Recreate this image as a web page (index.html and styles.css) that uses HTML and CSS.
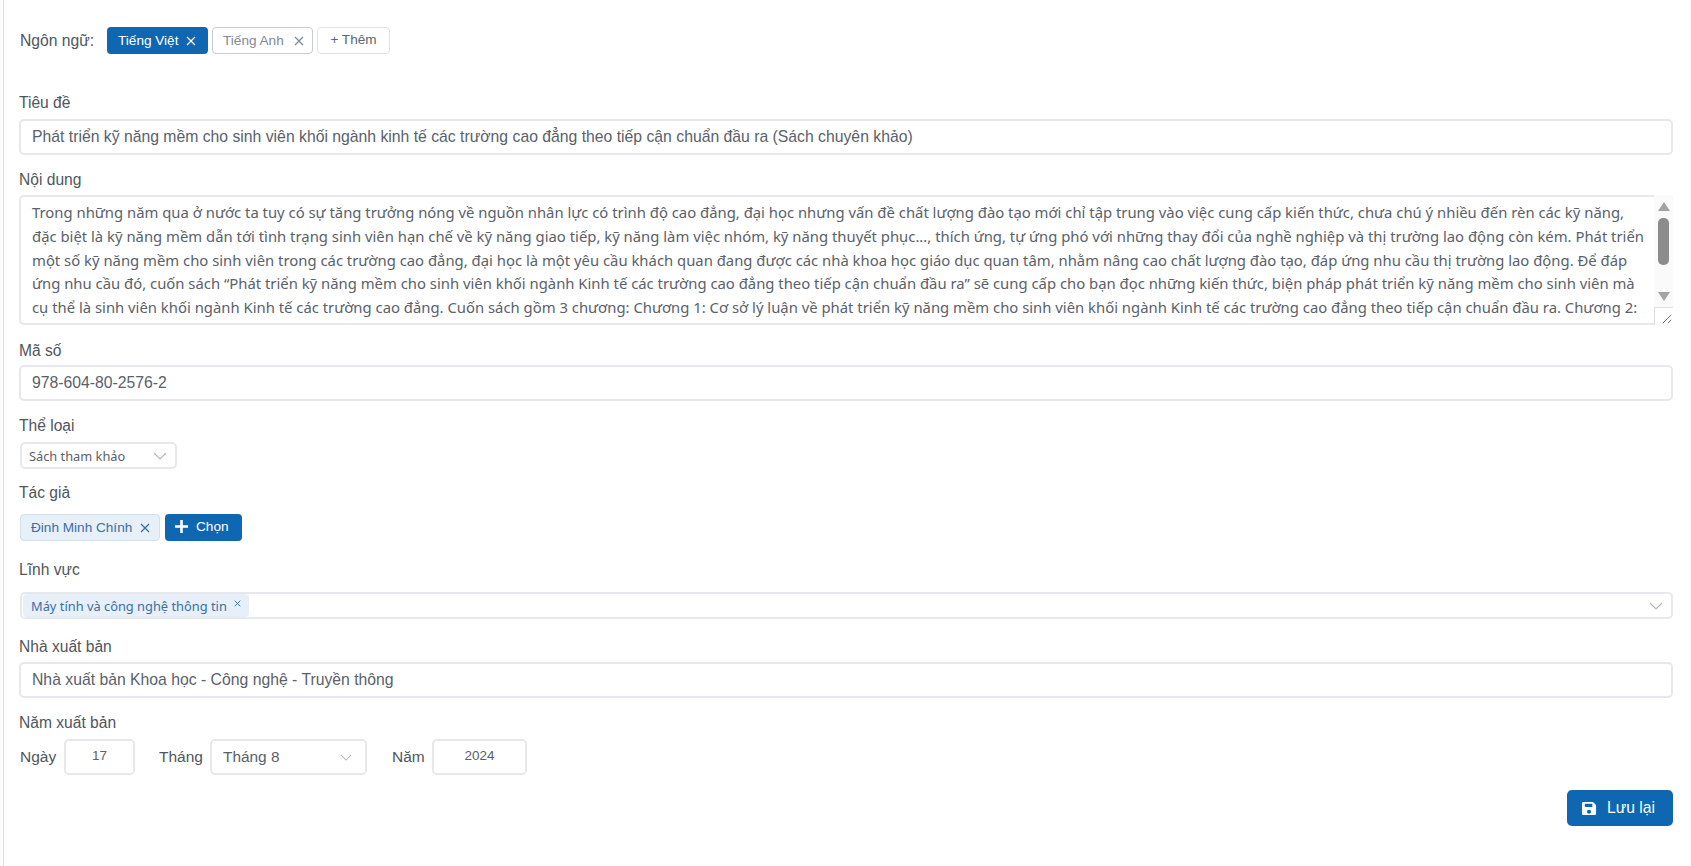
FILE: index.html
```html
<!DOCTYPE html>
<html lang="vi">

<head>
    <meta charset="UTF-8">
    <meta name="viewport" content="width=device-width, initial-scale=1.0">
    <title>Sửa sách</title>
    <link rel="stylesheet" href="styles.css">
</head>

<body>
    <div class="page">
        <div class="lang-row">
            <span class="lang-label">Ngôn ngữ:</span>
            <span class="tag tag-active">Tiếng Việt
                <svg class="x-icon" viewBox="0 0 10 10"><path d="M1 1l8 8M9 1l-8 8" /></svg>
            </span>
            <span class="tag tag-outline">Tiếng Anh
                <svg class="x-icon" viewBox="0 0 10 10"><path d="M1 1l8 8M9 1l-8 8" /></svg>
            </span>
            <span class="tag tag-add">+ Thêm</span>
        </div>

        <div class="group group-title">
            <label class="field-label">Tiêu đề</label>
            <div class="input">Phát triển kỹ năng mềm cho sinh viên khối ngành kinh tế các trường cao đẳng theo tiếp cận chuẩn đầu ra (Sách chuyên khảo)</div>
        </div>

        <div class="group group-content">
            <label class="field-label">Nội dung</label>
            <div class="textarea">
                <div class="textarea-text">
                    <div>Trong những năm qua ở nước ta tuy có sự tăng trưởng nóng về nguồn nhân lực có trình độ cao đẳng, đại học nhưng vấn đề chất lượng đào tạo mới chỉ tập trung vào việc cung cấp kiến thức, chưa chú ý nhiều đến rèn các kỹ năng,</div>
                    <div>đặc biệt là kỹ năng mềm dẫn tới tình trạng sinh viên hạn chế về kỹ năng giao tiếp, kỹ năng làm việc nhóm, kỹ năng thuyết phục..., thích ứng, tự ứng phó với những thay đổi của nghề nghiệp và thị trường lao động còn kém. Phát triển</div>
                    <div>một số kỹ năng mềm cho sinh viên trong các trường cao đẳng, đại học là một yêu cầu khách quan đang được các nhà khoa học giáo dục quan tâm, nhằm nâng cao chất lượng đào tạo, đáp ứng nhu cầu thị trường lao động. Để đáp</div>
                    <div>ứng nhu cầu đó, cuốn sách “Phát triển kỹ năng mềm cho sinh viên khối ngành Kinh tế các trường cao đẳng theo tiếp cận chuẩn đầu ra” sẽ cung cấp cho bạn đọc những kiến thức, biện pháp phát triển kỹ năng mềm cho sinh viên mà</div>
                    <div>cụ thể là sinh viên khối ngành Kinh tế các trường cao đẳng. Cuốn sách gồm 3 chương: Chương 1: Cơ sở lý luận về phát triển kỹ năng mềm cho sinh viên khối ngành Kinh tế các trường cao đẳng theo tiếp cận chuẩn đầu ra. Chương 2:</div>
                    <div>Thực trạng phát triển kỹ năng mềm cho sinh viên khối ngành Kinh tế các trường cao đẳng theo tiếp cận chuẩn đầu ra. Chương 3: Biện pháp phát triển kỹ năng mềm</div>
                </div>
                <div class="scrollbar">
                    <div class="scroll-track">
                        <svg class="scroll-arrow" viewBox="0 0 12 9"><path d="M6 0l6 9H0z" /></svg>
                        <div class="scroll-thumb"></div>
                        <svg class="scroll-arrow" viewBox="0 0 12 9"><path d="M0 0h12L6 9z" /></svg>
                    </div>
                    <div class="resizer">
                        <svg viewBox="0 0 12 12"><path d="M1 11L11 1M7 11l4-4" /></svg>
                    </div>
                </div>
            </div>
        </div>

        <div class="group group-code">
            <label class="field-label">Mã số</label>
            <div class="input">978-604-80-2576-2</div>
        </div>

        <div class="group group-type">
            <label class="field-label">Thể loại</label>
            <div class="select select-type">Sách tham khảo
                <svg class="chevron" viewBox="0 0 14 8"><path d="M1 1l6 6 6-6" /></svg>
            </div>
        </div>

        <div class="group group-author">
            <label class="field-label">Tác giả</label>
            <div class="author-row">
                <span class="tag tag-light">Đinh Minh Chính
                    <svg class="x-icon" viewBox="0 0 10 10"><path d="M1 1l8 8M9 1l-8 8" /></svg>
                </span>
                <span class="tag tag-choose">
                    <svg class="plus-icon" viewBox="0 0 12 12"><path d="M6 0v12M0 6h12" /></svg>
                    Chọn
                </span>
            </div>
        </div>

        <div class="group group-field">
            <label class="field-label">Lĩnh vực</label>
            <div class="multi-select">
                <span class="chip">Máy tính và công nghệ thông tin
                    <svg class="chip-x" viewBox="0 0 10 10"><path d="M1 1l8 8M9 1l-8 8" /></svg>
                </span>
                <svg class="chevron" viewBox="0 0 14 8"><path d="M1 1l6 6 6-6" /></svg>
            </div>
        </div>

        <div class="group group-publisher">
            <label class="field-label">Nhà xuất bản</label>
            <div class="input">Nhà xuất bản Khoa học - Công nghệ - Truyền thông</div>
        </div>

        <div class="group group-year">
            <label class="field-label">Năm xuất bản</label>
            <div class="date-row">
                <span class="date-label date-day-label">Ngày</span>
                <div class="date-input date-day">17</div>
                <span class="date-label date-month-label">Tháng</span>
                <div class="select select-month">Tháng 8
                    <svg class="chevron" viewBox="0 0 14 8"><path d="M1 1l6 6 6-6" /></svg>
                </div>
                <span class="date-label date-year-label">Năm</span>
                <div class="date-input date-year">2024</div>
            </div>
        </div>

        <div class="actions">
            <button class="save-button">
                <svg class="save-icon" viewBox="0 0 16 16"><path fill-rule="evenodd" d="M1.5 1h10.2L15 4.3v9.2c0 .8-.7 1.5-1.5 1.5h-12C.7 15 0 14.300 0 13.500v-11C0 1.700.7 1 1.500 1zM3 3v3.500h8V3zm4.500 6.200a2.200 2.200 0 1 0 0 4.400 2.200 2.200 0 0 0 0-4.400z" /></svg>
                Lưu lại
            </button>
        </div>
    </div>
</body>
</html>
```

FILE: styles.css
```css
body {
    margin: 0;
    font-family: "Liberation Sans", Arial, sans-serif;
    background-color: #fcfcfd;
    color: #50565c;
}

.page {
    box-sizing: border-box;
    height: 866px;
    margin: 0 2px 0 3px;
    padding: 27px 16px 0 15px;
    background-color: #ffffff;
    border-left: 1px solid #dcdee3;
}

.lang-row {
    display: flex;
    align-items: center;
    height: 27px;
}

.lang-label {
    padding-left: 1px;
    width: 87px;
    font-size: 15.7px;
}

.tag {
    box-sizing: border-box;
    display: inline-flex;
    align-items: center;
    height: 27px;
    border-radius: 4px;
    font-size: 13.6px;
    white-space: nowrap;
}

.x-icon {
    width: 10px;
    height: 10px;
    margin-left: 8px;
    fill: none;
    stroke: currentColor;
    stroke-width: 1.3;
}

.tag-active {
    width: 101px;
    padding-left: 11px;
    background-color: #0f67b1;
    color: #ffffff;
}

.tag-outline {
    width: 101px;
    margin-left: 4px;
    padding-left: 10px;
    border: 1px solid #c6ccd6;
    color: #828a94;
}

.tag-outline .x-icon {
    margin-left: 10px;
}

.tag-add {
    width: 73px;
    margin-left: 4px;
    justify-content: center;
    padding-bottom: 2px;
    border: 1px solid #dfe2e8;
    color: #5c6570;
}

.group {
    margin-top: 12px;
}

.group-title {
    margin-top: 37px;
}

.group-content {
    margin-top: 13px;
}

.group-content .field-label {
    margin-bottom: 3px;
}

.group-code {
    margin-top: 14px;
}

.group-code .field-label {
    margin-bottom: 2px;
}

.group-type {
    margin-top: 13px;
}

.group-type .field-label {
    margin-bottom: 4px;
}

.group-author {
    margin-top: 12px;
}

.group-author .field-label {
    margin-bottom: 9px;
}

.group-field {
    margin-top: 17px;
}

.group-field .field-label {
    margin-bottom: 10px;
}

.group-publisher {
    margin-top: 16px;
}

.group-publisher .field-label {
    margin-bottom: 3px;
}

.group-year {
    margin-top: 13px;
}

.field-label {
    display: block;
    height: 24px;
    margin-bottom: 4px;
    line-height: 24px;
    font-size: 15.6px;
}

.input {
    box-sizing: border-box;
    height: 36px;
    line-height: 32px;
    padding: 0 11px;
    background-color: #ffffff;
    border: 2px solid #e6e8ee;
    border-radius: 5px;
    font-size: 15.75px;
    color: #5a6169;
}

.textarea {
    display: flex;
    height: 130px;
}

.textarea-text {
    flex: 1;
    min-width: 0;
    padding: 4px 0 0 11px;
    overflow: hidden;
    border-top: 2px solid #e6e8ee;
    border-left: 2px solid #e6e8ee;
    border-bottom: 2px solid #e6e8ee;
    border-radius: 5px 0 0 5px;
    font-family: "Noto Sans", sans-serif;
    font-size: 14.85px;
    line-height: 23.75px;
    color: #5a6169;
    white-space: nowrap;
}

.scrollbar {
    display: flex;
    flex-direction: column;
    flex: 0 0 19px;
    background-color: #ffffff;
}

.scroll-track {
    flex: 1;
    display: flex;
    flex-direction: column;
    align-items: center;
    padding-top: 7px;
    background-color: #fafafa;
}

.scroll-arrow {
    width: 12px;
    height: 9px;
    fill: #a3a3a3;
}

.scroll-thumb {
    width: 11px;
    height: 47px;
    margin: 7px 0 27px;
    border-radius: 5px;
    background-color: #8c8c8c;
}

.resizer {
    flex: 0 0 18px;
    box-sizing: border-box;
    padding: 6px 0 0 7px;
    border-top: 1px solid #dcdee3;
    border-left: 1px solid #dcdee3;
}

.resizer svg {
    display: block;
    width: 10px;
    height: 10px;
    fill: none;
    stroke: #555555;
    stroke-width: 1;
}

.select {
    box-sizing: border-box;
    display: flex;
    align-items: center;
    justify-content: space-between;
    background-color: #ffffff;
    border: 2px solid #e6e8ee;
    border-radius: 5px;
    color: #5a6169;
}

.chevron {
    width: 14px;
    height: 8px;
    fill: none;
    stroke: #b4b8be;
    stroke-width: 1.2;
}

.select-type {
    width: 157px;
    height: 27px;
    margin-left: 1px;
    padding: 0 8px 0 7px;
    font-family: "Noto Sans", sans-serif;
    font-size: 12.8px;
}

.author-row {
    display: flex;
    align-items: center;
    margin-left: 1px;
}

.tag-light {
    width: 140px;
    padding-left: 10px;
    background-color: #e7f0f8;
    border: 1px solid #cfe0ef;
    color: #3a6fa3;
}

.tag-choose {
    width: 77px;
    margin-left: 5px;
    padding: 0 0 2px 10px;
    background-color: #0f67b1;
    color: #ffffff;
}

.plus-icon {
    width: 13px;
    height: 13px;
    margin-right: 8px;
    fill: none;
    stroke: #ffffff;
    stroke-width: 2.4;
}

.multi-select {
    box-sizing: border-box;
    display: flex;
    align-items: center;
    justify-content: space-between;
    height: 27px;
    padding: 0 8px 0 1px;
    margin-left: 1px;
    border: 2px solid #e6e8ee;
    border-radius: 5px;
}

.chip {
    display: inline-flex;
    align-items: center;
    box-sizing: border-box;
    width: 226px;
    height: 23px;
    padding-left: 8px;
    background-color: #e7f0f8;
    border-radius: 4px;
    font-family: "Noto Sans", sans-serif;
    font-size: 12.85px;
    color: #3a6fa3;
    white-space: nowrap;
}

.chip-x {
    width: 7px;
    height: 7px;
    margin: -4px 0 0 7px;
    fill: none;
    stroke: #3a6fa3;
    stroke-width: 1.4;
}

.date-row {
    display: flex;
    align-items: center;
    height: 36px;
}

.date-label {
    padding-left: 1px;
    font-size: 15.5px;
}

.date-input {
    box-sizing: border-box;
    height: 36px;
    line-height: 30px;
    background-color: #ffffff;
    border: 2px solid #e6e8ee;
    border-radius: 5px;
    font-size: 13.5px;
    text-align: center;
    color: #5a6169;
}

.date-day-label {
    width: 44px;
}

.date-day {
    width: 71px;
}

.date-month-label {
    width: 51px;
    margin-left: 23px;
}

.select-month {
    width: 157px;
    height: 36px;
    padding: 0 13px 0 11px;
    font-size: 15.4px;
}

.select-month .chevron {
    width: 12px;
    height: 7px;
}

.date-year-label {
    width: 40px;
    margin-left: 24px;
}

.date-year {
    width: 95px;
}

.actions {
    display: flex;
    justify-content: flex-end;
    margin-top: 15px;
}

.save-button {
    display: flex;
    align-items: center;
    width: 106px;
    height: 36px;
    padding: 0 0 0 15px;
    background-color: #0f67b1;
    border: none;
    border-radius: 5px;
    font-family: "Liberation Sans", Arial, sans-serif;
    font-size: 15.7px;
    color: #ffffff;
}

.save-icon {
    width: 15px;
    height: 15px;
    margin-right: 10px;
    fill: #ffffff;
}
```
